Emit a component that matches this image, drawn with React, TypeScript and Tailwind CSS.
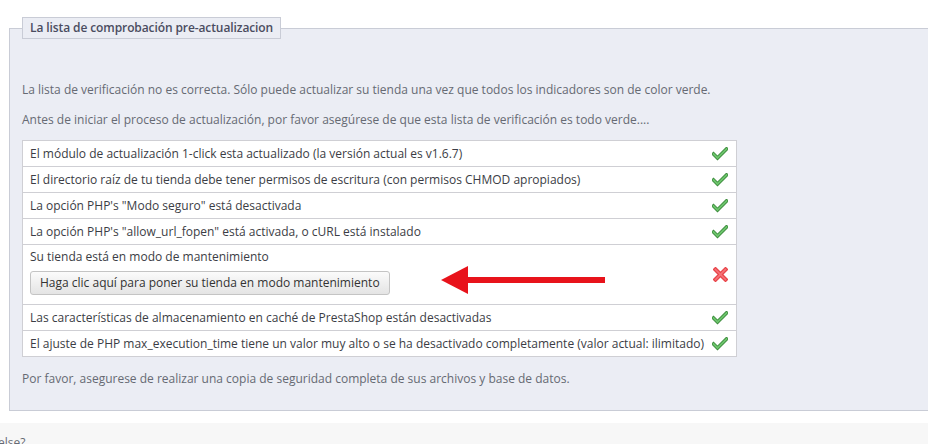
import React from 'react';

interface CheckItem {
  label: string;
  ok: boolean;
}

const items: CheckItem[] = [
  { label: 'El módulo de actualización 1-click esta actualizado (la versión actual es v1.6.7)', ok: true },
  { label: 'El directorio raíz de tu tienda debe tener permisos de escritura (con permisos CHMOD apropiados)', ok: true },
  { label: 'La opción PHP\'s "Modo seguro" está desactivada', ok: true },
  { label: 'La opción PHP\'s "allow_url_fopen" está activada, o cURL está instalado', ok: true },
];

const itemsAfter: CheckItem[] = [
  { label: 'Las características de almacenamiento en caché de PrestaShop están desactivadas', ok: true },
  { label: 'El ajuste de PHP max_execution_time tiene un valor muy alto o se ha desactivado completamente (valor actual: ilimitado)', ok: true },
];

const OkIcon = () => (
  <svg width="16" height="14" viewBox="0 0 16 14">
    <polyline points="1.5,7 5.5,11 14.5,2" fill="none" stroke="#3d8b3d" strokeWidth="3.6" strokeLinecap="square" />
    <polyline points="1.5,7 5.5,11 14.5,2" fill="none" stroke="#6cc46c" strokeWidth="1.8" strokeLinecap="square" />
  </svg>
);

const FailIcon = () => (
  <svg width="15" height="15" viewBox="0 0 15 15">
    <path d="M2.5 2.5 L12.5 12.5 M12.5 2.5 L2.5 12.5" stroke="#e9454a" strokeWidth="4.2" strokeLinecap="square" />
    <path d="M2.5 2.5 L12.5 12.5 M12.5 2.5 L2.5 12.5" stroke="#f57479" strokeWidth="1.6" strokeLinecap="square" />
  </svg>
);

const Row = ({ item }: { item: CheckItem }) => (
  <div className="flex h-[26px] items-center justify-between border-b border-[#cfcfd4] pl-[7px] pr-[8px]">
    <span>{item.label}</span>
    {item.ok ? <OkIcon /> : <FailIcon />}
  </div>
);

export default function App() {
  return (
    <div
      className="relative h-[444px] w-[928px] overflow-hidden bg-white text-[12px] leading-[18px] text-[#666a73]"
      style={{ fontFamily: '"Open Sans", "Noto Sans", sans-serif' }}
    >
      <fieldset className="ml-[9px] mt-[17px] w-[940px] border border-[#c9ccd6] bg-[#ebedf4] px-3 pb-[22px]">
        <legend className="h-[22px] border border-[#c9ccd6] bg-[#ebedf4] px-[7px] text-[12px] font-semibold leading-[20px] tracking-[-0.1px] text-[#4a4c60]">
          La lista de comprobación pre-actualizacion
        </legend>

        <p className="mt-[42px]">
          La lista de verificación no es correcta. Sólo puede actualizar su tienda una vez que todos los indicadores son de color verde.
        </p>
        <p className="mt-[12px]">
          Antes de iniciar el proceso de actualización, por favor asegúrese de que esta lista de verificación es todo verde....
        </p>

        <div className="mt-[11px] w-[715px] border-x border-t border-[#cfcfd4] bg-white text-[#3b3d45]">
          {items.map((item) => (
            <Row key={item.label} item={item} />
          ))}
          <div className="flex h-[60px] items-center justify-between border-b border-[#cfcfd4] pl-[7px] pr-[8px]">
            <div className="flex flex-col items-start pt-[3px] pb-[9px]">
              <span>Su tienda está en modo de mantenimiento</span>
              <button className="mt-[5px] h-[24px] rounded-[3px] border border-[#c4c4c4] bg-gradient-to-b from-[#fbfbfb] to-[#e4e4e4] px-[9px] text-[12px] text-[#333]">
                Haga clic aquí para poner su tienda en modo mantenimiento
              </button>
            </div>
            <FailIcon />
          </div>
          {itemsAfter.map((item) => (
            <Row key={item.label} item={item} />
          ))}
        </div>

        <p className="mt-[13px]">
          Por favor, asegurese de realizar una copia de seguridad completa de sus archivos y base de datos.
        </p>
      </fieldset>

      <div className="mt-[12px] h-[40px] bg-[#f7f7f7] pt-[11px] text-[#666a73]">
        <span className="-ml-[2px]">else?</span>
      </div>

      {/* flecha roja */}
      <svg className="absolute left-[440px] top-[265px]" width="168" height="30" viewBox="0 0 168 30">
        <polygon points="1,15 28,1 28,29" fill="#e8131b" />
        <rect x="26" y="12" width="139" height="6" fill="#e8131b" />
      </svg>
    </div>
  );
}
